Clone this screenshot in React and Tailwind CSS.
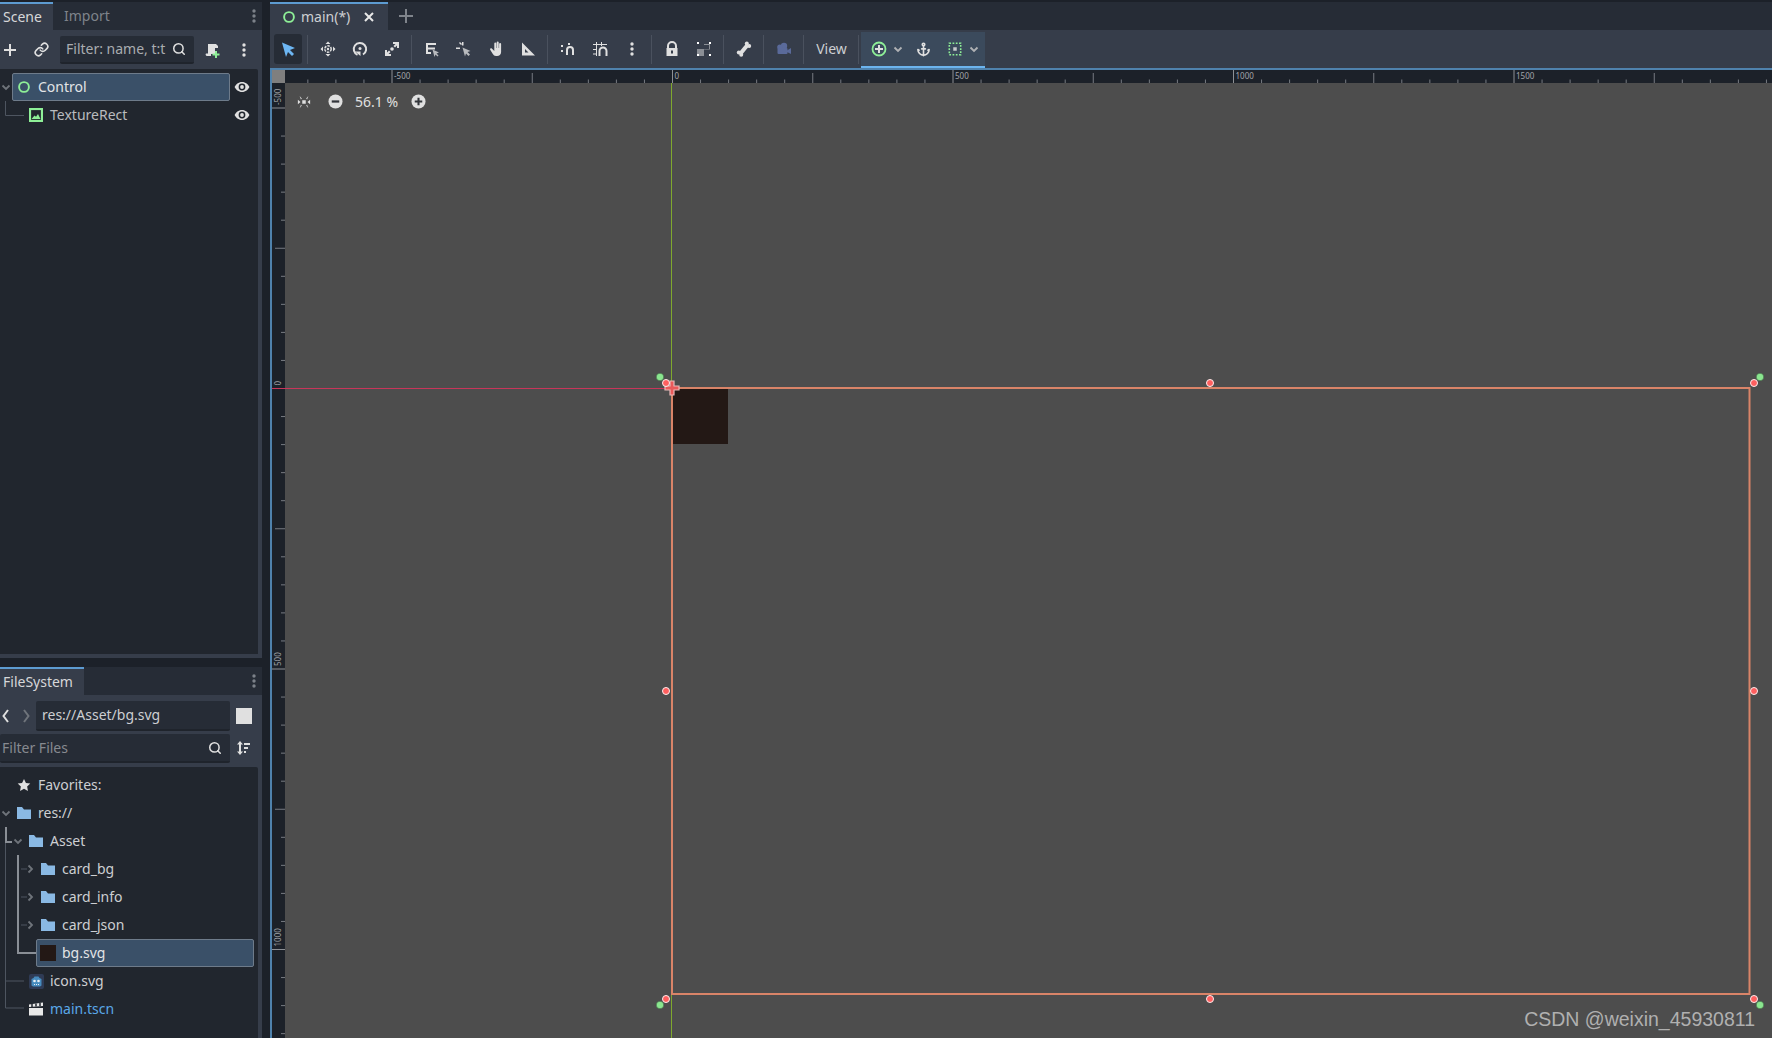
import { Anchor, Link, Search } from 'lucide-react';

const RED_HANDLES = [
  [666, 383], [1210, 383], [1754, 383],
  [666, 691], [1754, 691],
  [666, 999], [1210, 999], [1754, 999],
];
const GREEN_HANDLES = [[660, 377], [1760, 377], [660, 1005], [1760, 1005]];

// 100 units of the scene are 28.05 px on screen
const STEP = 28.05;

function Icon({ children, className = 'w-4 h-4' }) {
  return (
    <svg viewBox="0 0 16 16" className={`${className} flex-none`}>
      {children}
    </svg>
  );
}

const ControlDot = () => (
  <Icon className="w-[14px] h-[14px]">
    <circle cx="8" cy="8" r="5.6" fill="none" stroke="#8eef97" strokeWidth="2.2" />
  </Icon>
);

const Eye = () => (
  <Icon>
    <path d="M8 3C4.4 3 1.8 5.5.6 8c1.2 2.5 3.8 5 7.4 5s6.2-2.5 7.4-5C14.2 5.5 11.6 3 8 3z" fill="#e0e0e0" />
    <circle cx="8" cy="8" r="3.4" fill="#21262e" />
    <circle cx="8" cy="8" r="1.9" fill="#e0e0e0" />
  </Icon>
);

const Dots = ({ color = '#e0e0e0' }) => (
  <Icon>
    <circle cx="8" cy="3" r="1.7" fill={color} />
    <circle cx="8" cy="8" r="1.7" fill={color} />
    <circle cx="8" cy="13" r="1.7" fill={color} />
  </Icon>
);

const Chevron = ({ open, dim }) => (
  <svg viewBox="0 0 10 10" className="w-[10px] h-[10px] flex-none">
    <path
      d={open ? 'M1.5 3.5 5 7l3.5-3.5' : 'M3.5 1.5 7 5 3.5 8.5'}
      fill="none"
      stroke={dim ? '#6f747b' : '#b0b2b5'}
      strokeWidth="1.8"
    />
  </svg>
);

const Folder = () => (
  <svg viewBox="0 0 14 12" className="w-[14px] h-[12px] flex-none">
    <path d="M0 0h5l2 2.5h7V12H0z" fill="#8ab9e4" />
  </svg>
);

const Star = () => (
  <Icon className="w-[14px] h-[14px]">
    <path d="M8 1l2.2 4.6 5 .7-3.600 3.500.9 5L8 12.400 3.500 14.800l.9-5L.8 6.300l5-.7z" fill="#e0e0e0" />
  </Icon>
);

const Sep = () => <div className="ml-[3px] mr-[4px] w-px h-[29px] bg-[#4a515e] flex-none" />;

function ToolBtn({ children }) {
  return <div className="w-8 h-[30px] flex items-center justify-center flex-none">{children}</div>;
}

function TopRuler() {
  const ticks = [];
  for (let i = -13; i <= 39; i++) {
    const x = 672.5 + i * STEP;
    const major = i % 10 === 0;
    const mid = !major && i % 5 === 0;
    ticks.push(
      <line
        key={i}
        x1={x}
        x2={x}
        y1={major ? 70 : mid ? 73 : 79.5}
        y2="83"
        stroke={major ? '#8d9095' : '#777b82'}
      />
    );
    if (major) {
      ticks.push(
        <text key={`t${i}`} x={x + 2} y="78.5" fontSize="8" fill="#a3a5a9" fontFamily="Noto Sans">
          {i * 50}
        </text>
      );
    }
  }
  return (
    <svg viewBox="285 70 1487 13" className="w-[1487px] h-[13px] flex-none">
      {ticks}
    </svg>
  );
}

function LeftRuler() {
  const ticks = [];
  for (let i = -10; i <= 23; i++) {
    const y = 388.5 + i * STEP;
    const major = i % 10 === 0;
    const mid = !major && i % 5 === 0;
    ticks.push(
      <line
        key={i}
        y1={y}
        y2={y}
        x1={major ? 272 : mid ? 275 : 281}
        x2="285"
        stroke={major ? '#8d9095' : '#777b82'}
      />
    );
    if (major) {
      ticks.push(
        <text
          key={`t${i}`}
          transform={`translate(281 ${y - 3}) rotate(-90)`}
          fontSize="8"
          fill="#a3a5a9"
          fontFamily="Noto Sans"
        >
          {i * 50}
        </text>
      );
    }
  }
  return (
    <svg viewBox="272 83 13 955" className="w-[13px] h-[955px] flex-none bg-[#1c2129]">
      {ticks}
    </svg>
  );
}

function Gizmos() {
  return (
    <svg viewBox="272 83 1500 955" className="absolute inset-0 w-[1500px] h-[955px] pointer-events-none">
      <rect x="673" y="389" width="55" height="55" fill="#231815" />
      <line x1="272" x2="672" y1="388.5" y2="388.5" stroke="#c8365a" strokeWidth="1.2" />
      <line x1="671.5" x2="671.5" y1="83" y2="1038" stroke="#7fa82e" />
      <rect x="672" y="388" width="1077.5" height="606" fill="none" stroke="#d98468" strokeWidth="2" />
      <path
        d="M670 381h4v5h5v4h-5v5h-4v-5h-5v-4h5z"
        fill="#ea5a5a"
        stroke="#e8b7b7"
        strokeWidth="1.2"
      />
      {GREEN_HANDLES.map(([x, y]) => (
        <circle key={`${x}-${y}`} cx={x} cy={y} r="3.8" fill="#8ae68f" stroke="#3c5a40" strokeWidth=".6" />
      ))}
      {RED_HANDLES.map(([x, y]) => (
        <circle key={`${x}-${y}`} cx={x} cy={y} r="3.5" fill="#ff5f5f" stroke="#fdeeee" strokeWidth="1" />
      ))}
    </svg>
  );
}

function Row({ pad, children, blue }) {
  return (
    <div className={`h-7 flex items-center ${pad} ${blue ? 'text-[#5aa8e8]' : 'text-[#cdcfd2]'}`}>
      {children}
    </div>
  );
}

function SceneDock() {
  return (
    <div className="h-[656px] bg-[#363d4a] flex flex-col flex-none">
      <div className="h-[28px] flex bg-[#262c36] items-center flex-none">
        <div className="w-[53px] h-full bg-[#363d4a] border-t-2 border-[#5d9bd1] pl-[3px] pb-[1px] flex items-center text-[#d6d7d9]">Scene</div>
        <div className="ml-[11px] text-[#7f848b] flex-1">Import</div>
        <div className="w-4 flex items-center"><Dots color="#7c8189" /></div>
      </div>
      <div className="h-[39px] flex items-center flex-none">
        <div className="w-[20px] flex justify-center">
          <Icon><path d="M7 2h2v5h5v2H9v5H7V9H2V7h5z" fill="#e0e0e0" /></Icon>
        </div>
        <div className="ml-[11px] w-[20px] flex justify-center">
          <Link size={15} strokeWidth={2.6} color="#e0e0e0" />
        </div>
        <div className="ml-[9px] w-[134px] h-7 bg-[#262c36] border-b-2 border-[#1f242c] rounded-[2px] flex items-center pl-[6px] pt-[1px] text-[#a9acb0]">
          <span className="w-[101px] whitespace-nowrap flex-none">Filter: name, t:t</span>
          <Search size={14} strokeWidth={2.6} color="#e0e0e0" className="ml-[5px] flex-none" />
        </div>
        <div className="ml-[10px] w-4">
          <Icon>
            <path d="M4 2h8l2 2v2h-3v6H7v2H3a1.5 1.5 0 0 1-1-2.5h2z" fill="#e0e0e0" />
            <path d="M11 9h2v2.5h2.5v2H13V16h-2v-2.5H8.5v-2H11z" fill="#8eef97" />
          </Icon>
        </div>
        <div className="ml-4 w-4"><Dots /></div>
      </div>
      <div className="w-[258px] h-[585px] bg-[#21262e] pt-1 relative flex-none rounded-tr-[2px]">
        <svg viewBox="0 0 258 60" className="absolute left-0 top-0 w-[258px] h-[60px]">
          <path d="M5.5 32v14.5H24" fill="none" stroke="#4e5560" />
        </svg>
        <div className="h-7 flex items-center relative">
          <div className="ml-[1px] w-[10px]"><Chevron open dim /></div>
          <div className="ml-[1px] w-[218px] h-7 bg-[#3a5068] border border-[#6e7b8a] rounded-[2px] flex items-center pl-[4px] text-[#e2e4e6]">
            <ControlDot />
            <span className="ml-[7px]">Control</span>
          </div>
          <div className="ml-[4px]"><Eye /></div>
        </div>
        <div className="h-7 flex items-center relative text-[#b9bbbe]">
          <svg viewBox="0 0 14 14" className="ml-[29px] w-[14px] h-[14px] flex-none">
            <rect x="1" y="1" width="12" height="12" fill="none" stroke="#8eef97" strokeWidth="2.2" />
            <path d="M2.5 11l3-3.5 1.5 1.200 2-2.700 2.500 5z" fill="#8eef97" />
          </svg>
          <span className="ml-[7px] w-[185px]">TextureRect</span>
          <div className="-ml-[1px]"><Eye /></div>
        </div>
      </div>
    </div>
  );
}

function FileDock() {
  return (
    <div className="h-[371px] bg-[#363d4a] flex flex-col flex-none">
      <div className="h-[28px] flex bg-[#262c36] items-center flex-none">
        <div className="w-[84px] h-full bg-[#363d4a] border-t-2 border-[#5d9bd1] pl-[3px] pb-[1px] flex items-center text-[#d6d7d9]">FileSystem</div>
        <div className="flex-1" />
        <div className="w-4 flex items-center"><Dots color="#7c8189" /></div>
      </div>
      <div className="h-[39px] flex items-center flex-none pt-[6px] pb-[3px]">
        <svg viewBox="0 0 10 16" className="w-[10px] h-4 ml-[1px] flex-none">
          <path d="M7 2 2.5 8 7 14" fill="none" stroke="#e0e0e0" strokeWidth="2" />
        </svg>
        <svg viewBox="0 0 10 16" className="w-[10px] h-4 ml-[10px] flex-none">
          <path d="M3 2l4.5 6L3 14" fill="none" stroke="#6f747b" strokeWidth="2" />
        </svg>
        <div className="ml-[5px] w-[194px] h-[30px] bg-[#262c36] border-b-2 border-[#1f242c] rounded-[2px] flex items-center pl-[6px] text-[#cdcfd2]">res://Asset/bg.svg</div>
        <div className="ml-[6px] w-4 h-4 bg-[#e0e0e0]" />
      </div>
      <div className="h-[33px] flex items-start flex-none">
        <div className="w-[230px] h-[29px] bg-[#262c36] border-b-2 border-[#1f242c] rounded-[2px] flex items-center pl-[2px] text-[#868a90]">
          <span className="flex-1">Filter Files</span>
          <Search size={14} strokeWidth={2.6} color="#e0e0e0" className="mr-[8px]" />
        </div>
        <div className="ml-[5px] mt-[6px]">
          <Icon>
            <path d="M5 1l3 3.5H6v7h2L5 15l-3-3.5h2v-7H2z" fill="#e0e0e0" />
            <path d="M9 3h6v2H9zM9 7h4v2H9zM9 11h2v2H9z" fill="#e0e0e0" />
          </Icon>
        </div>
      </div>
      <div className="w-[258px] flex-1 bg-[#21262e] pt-1 relative rounded-tr-[2px]">
        <svg viewBox="0 0 258 271" className="absolute left-0 top-0 w-[258px] h-[271px]">
          <path d="M5.5 74v167M5.5 214H24M5.5 241H24" fill="none" stroke="#4e5560" />
          <path d="M21 102h6M21 130h6M21 158h6" fill="none" stroke="#4e5560" />
          <path d="M6 60v15h6" fill="none" stroke="#8a8f96" strokeWidth="2" />
          <path d="M18 88v98h18" fill="none" stroke="#8a8f96" strokeWidth="2" />
        </svg>
        <div className="relative">
          <Row pad="pl-[17px]">
            <Star />
            <span className="ml-[7px]">Favorites:</span>
          </Row>
          <Row pad="pl-[1px]">
            <Chevron open dim />
            <div className="ml-[6px]"><Folder /></div>
            <span className="ml-[7px]">res://</span>
          </Row>
          <Row pad="pl-[13px]">
            <Chevron open dim />
            <div className="ml-[6px]"><Folder /></div>
            <span className="ml-[7px]">Asset</span>
          </Row>
          {['card_bg', 'card_info', 'card_json'].map((name) => (
            <Row key={name} pad="pl-[25px]">
              <Chevron dim />
              <div className="ml-[6px]"><Folder /></div>
              <span className="ml-[7px]">{name}</span>
            </Row>
          ))}
          <div className="h-7 ml-[36px] w-[218px] bg-[#3a5068] border border-[#6e7b8a] rounded-[2px] flex items-center pl-[3px] text-[#e2e4e6]">
            <div className="w-4 h-4 bg-[#231815] flex-none" />
            <span className="ml-[6px]">bg.svg</span>
          </div>
          <Row pad="pl-[29px]">
            <svg viewBox="0 0 15 15" className="w-[15px] h-[15px] flex-none">
              <rect width="15" height="15" rx="2" fill="#2f3b55" />
              <path d="M2.5 5l2-1 1-1.5h4l1 1.5 2 1v6.5L11 12.5H4l-1.5-1z" fill="#478cbf" />
              <circle cx="5.5" cy="7" r="1.3" fill="#e8eef4" />
              <circle cx="9.5" cy="7" r="1.3" fill="#e8eef4" />
              <path d="M5 10.5h5" stroke="#e8eef4" strokeDasharray="1 1" />
            </svg>
            <span className="ml-[6px]">icon.svg</span>
          </Row>
          <Row pad="pl-[29px]" blue>
            <svg viewBox="0 0 14 14" className="w-[14px] h-[14px] flex-none">
              <path d="M0 6h14v7.5H0z" fill="#e8e8e8" />
              <path d="M0 2.5 14 .5v3.500L0 5z" fill="#e8e8e8" />
              <path d="M3 2v3M7 1.5v3M11 1v3" stroke="#21262e" strokeWidth="1.5" />
            </svg>
            <span className="ml-[7px]">main.tscn</span>
          </Row>
        </div>
      </div>
    </div>
  );
}

function Toolbar() {
  return (
    <div className="h-[38px] bg-[#363d4a] flex items-center flex-none pl-[2px]">
      <div className="ml-[2px] mr-[2px] w-7 h-[30px] bg-[#262c36] rounded-[3px] flex items-center justify-center flex-none">
        <Icon><path d="M2 1.5 15 7l-5 2 4 4-2 2-4-4-2 5z" fill="#6db6f3" /></Icon>
      </div>
      <Sep />
      <ToolBtn>
        <Icon>
          <path d="M8 .5 10.5 3h-5zM8 15.5 5.5 13h5zM.5 8 3 5.5v5zM15.5 8 13 10.5v-5z" fill="#e0e0e0" />
          <circle cx="8" cy="8" r="3.2" fill="none" stroke="#e0e0e0" strokeWidth="1.5" strokeDasharray="2.5 1" />
          <circle cx="8" cy="8" r="1.2" fill="#e0e0e0" />
        </Icon>
      </ToolBtn>
      <ToolBtn>
        <Icon>
          <path d="M5.5 13.8A6.2 6.2 0 1 1 11 13.5" fill="none" stroke="#e0e0e0" strokeWidth="2" />
          <path d="M3 10.5h5.5V15z" fill="#e0e0e0" />
          <circle cx="8" cy="7.5" r="1.5" fill="#e0e0e0" />
        </Icon>
      </ToolBtn>
      <ToolBtn>
        <Icon>
          <path d="M9 1h6v6h-2V4.500L11 6.500 9.500 5 11.500 3H9zM7 15H1V9h2v2.500L5 9.500 6.500 11 4.500 13H7z" fill="#e0e0e0" />
          <circle cx="8" cy="8" r="1.8" fill="#e0e0e0" />
        </Icon>
      </ToolBtn>
      <Sep />
      <ToolBtn>
        <Icon>
          <path d="M2 2h10v2H4v2.500h7v2H4V11h3v2H2z" fill="#e0e0e0" />
          <path d="M8.5 8.5l6.5 3-2.500 1 2 2-1 1-2-2-1 2.500z" fill="#b9bbbe" />
        </Icon>
      </ToolBtn>
      <ToolBtn>
        <Icon>
          <path d="M0 6.500h4v1.500H0zM6 1h1.500v3.500H6zM3 2l1-1 2 2-1 1z" fill="#e0e0e0" />
          <path d="M6.5 6.500l8 3.500-3 1 2.500 2.500-1.500 1.500-2.500-2.500-1 3z" fill="#b9bbbe" />
        </Icon>
      </ToolBtn>
      <ToolBtn>
        <Icon>
          <path d="M6.3 2.500a1 1 0 0 1 2 0V7h.4V1.500a1 1 0 0 1 2 0V7h.4V3a1 1 0 0 1 2 0v8c0 2.500-1.800 4-4 4H8c-1.500 0-2.500-.8-3.500-2.500L2.200 8.800c-.6-1.200 1-2 1.800-1L6.300 10z" fill="#e0e0e0" />
        </Icon>
      </ToolBtn>
      <ToolBtn>
        <Icon>
          <path d="M2 1.5l13 13H2zM5 8v3.500h3.500z" fillRule="evenodd" fill="#e0e0e0" />
        </Icon>
      </ToolBtn>
      <Sep />
      <ToolBtn>
        <Icon>
          <path d="M7 14V9a3 3 0 0 1 6 0v5" fill="none" stroke="#e0e0e0" strokeWidth="2" />
          <rect x="1" y="4" width="2" height="2" fill="#e0e0e0" />
          <rect x="1" y="9" width="2" height="2" fill="#e0e0e0" />
          <rect x="8" y="2" width="2" height="2" fill="#e0e0e0" />
        </Icon>
      </ToolBtn>
      <ToolBtn>
        <Icon>
          <path d="M4.5 1v14M9.5 1v4M1 3.500h14M1 8.500h4M1 13h4" fill="none" stroke="#e0e0e0" />
          <path d="M7.5 15V10a3.500 3.500 0 0 1 7 0v5" fill="none" stroke="#e0e0e0" strokeWidth="2" />
        </Icon>
      </ToolBtn>
      <ToolBtn><Dots /></ToolBtn>
      <Sep />
      <ToolBtn>
        <Icon>
          <path d="M4 7V5a4 4 0 0 1 8 0v2" fill="none" stroke="#e0e0e0" strokeWidth="2" />
          <path d="M2.5 7h11v8h-11zM7 9.500v3h2v-3z" fillRule="evenodd" fill="#e0e0e0" />
        </Icon>
      </ToolBtn>
      <ToolBtn>
        <Icon>
          <path d="M1 8h7V3h6v5.500H8V15H1z" fill="#8b8f96" fillRule="evenodd" />
          <path d="M8 4h5v4H8z" fill="#363d4a" />
          <path d="M1 1h2v2H1zM13 1h2v2h-2zM1 13h2v2H1zM13 13h2v2h-2z" fill="#fff" />
        </Icon>
      </ToolBtn>
      <Sep />
      <ToolBtn>
        <Icon>
          <path d="M4.5 12.500 11.500 4" stroke="#e0e0e0" strokeWidth="4" />
          <circle cx="2.8" cy="11.5" r="2" fill="#e0e0e0" />
          <circle cx="5.2" cy="13.8" r="2" fill="#e0e0e0" />
          <circle cx="10.8" cy="2.5" r="2" fill="#e0e0e0" />
          <circle cx="13.2" cy="5" r="2" fill="#e0e0e0" />
        </Icon>
      </ToolBtn>
      <Sep />
      <ToolBtn>
        <Icon>
          <circle cx="8" cy="5" r="3.2" fill="#5a6a9a" />
          <circle cx="3.8" cy="6" r="2.6" fill="#5a6a9a" />
          <rect x="1.5" y="7" width="10" height="6" rx="1" fill="#5a6a9a" />
          <path d="M11 9.500l4-2.500v6l-4-2z" fill="#5a6a9a" />
        </Icon>
      </ToolBtn>
      <Sep />
      <div className="w-[47px] text-center text-[#cdcfd2] flex-none">View</div>
      <div className="ml-[3px] mr-[2px] w-px h-[29px] bg-[#4a515e] flex-none" />
      <div className="self-stretch mt-[2px] w-[124px] bg-[#3b4a5c] border-b-2 border-[#6cb4ee] flex items-center pl-1 flex-none">
        <div className="w-7 flex justify-center">
          <Icon>
            <circle cx="8" cy="8" r="6.5" fill="none" stroke="#8eef97" strokeWidth="1.8" />
            <path d="M7 4h2v3h3v2H9v3H7V9H4V7h3z" fill="#e0e0e0" />
          </Icon>
        </div>
        <Chevron open />
        <div className="w-10 flex justify-center">
          <Anchor size={15} strokeWidth={2.6} color="#e0e0e0" />
        </div>
        <div className="w-6 flex justify-center">
          <Icon className="w-[14px] h-[14px]">
            <rect x="1.5" y="1.5" width="13" height="13" fill="none" stroke="#8eef97" strokeWidth="1.8" strokeDasharray="2 1.7" />
            <rect x="6" y="6" width="4" height="4" fill="#c8cacd" />
          </Icon>
        </div>
        <div className="w-[14px] flex justify-center"><Chevron open /></div>
      </div>
    </div>
  );
}

export default function App() {
  return (
    <div className="w-[1772px] h-[1038px] overflow-hidden bg-[#1c2129] flex text-[14px] leading-none font-['Noto_Sans',sans-serif]">
      <div className="w-[262px] flex-none flex flex-col pt-[2px] gap-[9px]">
        <SceneDock />
        <FileDock />
      </div>

      <div className="ml-2 flex-1 flex flex-col min-w-0 pt-[2px]">
        <div className="h-[28px] bg-[#262c36] flex items-center flex-none">
          <div className="w-[118px] h-full bg-[#363d4a] border-t-2 border-[#5d9bd1] flex items-center pl-3 text-[#cdcfd2]">
            <ControlDot />
            <span className="ml-[5px]">main(*)</span>
            <svg viewBox="0 0 12 12" className="w-3 h-3 ml-[13px]">
              <path d="M2 2l8 8M10 2l-8 8" stroke="#e8e8e8" strokeWidth="2" />
            </svg>
          </div>
          <svg viewBox="0 0 16 16" className="w-4 h-4 ml-[10px]">
            <path d="M7 1h2v6h6v2H9v6H7V9H1V7h6z" fill="#7f848b" />
          </svg>
        </div>
        <Toolbar />
        <div className="flex-1 border-l-2 border-t-2 border-[#4f82ad] flex flex-col">
          <div className="h-[13px] flex flex-none bg-[#1c2129]">
            <div className="w-[13px] h-[13px] bg-[#7f7f7f] flex-none" />
            <TopRuler />
          </div>
          <div className="flex-1 flex relative">
            <LeftRuler />
            <div className="flex-1 bg-[#4d4d4d]" />
            <Gizmos />
            <div className="absolute left-[25px] top-[11px] flex items-center text-[#e0e0e0]">
              <Icon className="w-[14px] h-[14px]">
                <path d="M3 1l2.5 3-1 1zM13 1l-2.5 3 1 1zM3 15l2.5-3-1-1zM13 15l-2.5-3 1-1zM1 5.500l3 2.500-3 2.500zM15 5.500l-3 2.500 3 2.500z" fill="#e0e0e0" />
                <rect x="6" y="6" width="4" height="4" fill="#e0e0e0" />
              </Icon>
              <svg viewBox="0 0 16 16" className="w-[15px] h-[15px] ml-[17px] flex-none">
                <circle cx="8" cy="8" r="7.5" fill="#e0e0e0" />
                <rect x="4" y="6.8" width="8" height="2.4" fill="#33363b" />
              </svg>
              <span className="ml-[12px] w-[44px] whitespace-nowrap">56.1 %</span>
              <svg viewBox="0 0 16 16" className="w-[15px] h-[15px] ml-[12px] flex-none">
                <circle cx="8" cy="8" r="7.5" fill="#e0e0e0" />
                <path d="M6.9 4h2.200v2.900H12v2.200H9.100V12H6.900V9.100H4V6.900h2.900z" fill="#33363b" />
              </svg>
            </div>
            <div className="absolute right-[17px] bottom-[9px] text-[#b0b0b0] text-[19.5px] font-['Liberation_Sans',sans-serif] whitespace-nowrap">
              CSDN @weixin_45930811
            </div>
          </div>
        </div>
      </div>
    </div>
  );
}
